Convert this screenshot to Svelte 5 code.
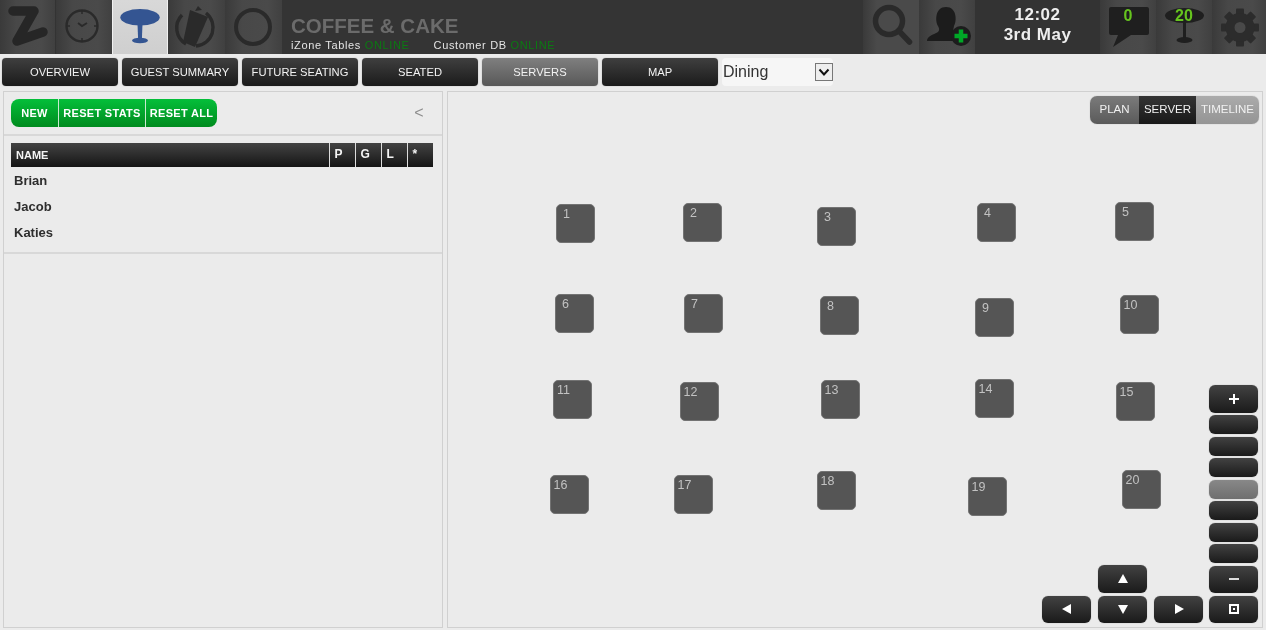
<script>
  const navItems = ['OVERVIEW', 'GUEST SUMMARY', 'FUTURE SEATING', 'SEATED', 'SERVERS', 'MAP'];
  const servers = ['Brian', 'Jacob', 'Katies'];
  const tables = [
    [556,204],[683,203],[817,207],[977,203],[1115,202],
    [555,294],[684,294],[820,296],[975,298],[1120,295],
    [553,380],[680,382],[821,380],[975,379],[1116,382],
    [550,475],[674,475],[817,471],[968,477],[1122,470]
  ];
  const steps = [0, 1, 2, 3, 4, 5, 6];
  const teeth = [0, 45, 90, 135, 180, 225, 270, 315];
</script>

<div class="page">
  <header class="top">
    <div class="tab w55">
      <svg width="55" height="54" viewBox="0 0 55 54"><path d="M13 11 L34 11 L17 41 L43 32" fill="none" stroke="#262626" stroke-width="9.500" stroke-linecap="round" stroke-linejoin="round"/></svg>
    </div>
    <div class="tab w57 sep">
      <svg width="56" height="54" viewBox="0 0 56 54"><g fill="none" stroke="#2a2a2a"><circle cx="27" cy="26" r="15.500" stroke-width="2.400"/><path d="M27 10v4M27 38v4M11 26h4M39 26h4" stroke-width="1.500"/><path d="M23 23l4 3 5-3" stroke-width="2"/></g></svg>
    </div>
    <div class="tab active">
      <svg width="54" height="54" viewBox="0 0 54 54"><ellipse cx="27" cy="17.300" rx="19.700" ry="8.300" fill="#345592"/><path d="M24.500 24h5l-.6 15h-3.800z" fill="#345592"/><ellipse cx="27" cy="40.500" rx="8" ry="2.800" fill="#345592"/></svg>
    </div>
    <div class="tab w57">
      <svg width="57" height="54" viewBox="0 0 57 54"><path d="M18 44A18.500 18.500 0 0 1 14 15M38 13A18.500 18.500 0 0 1 28 46" fill="none" stroke="#2a2a2a" stroke-width="3.400"/><path d="M22 10L40 17L27 47L15 42Z" fill="#2a2a2a"/><path d="M27 11l3-5 4 4z" fill="#2a2a2a"/></svg>
    </div>
    <div class="tab w57">
      <svg width="57" height="54" viewBox="0 0 57 54"><circle cx="28" cy="27" r="17" fill="none" stroke="#2a2a2a" stroke-width="4"/></svg>
    </div>
    <div class="title">
      <div class="name">COFFEE &amp; CAKE</div>
      <div class="status">
        <span>iZone Tables <em>ONLINE</em></span>
        <span>Customer DB <em>ONLINE</em></span>
      </div>
    </div>
    <div class="tab w56 right">
      <svg width="56" height="54" viewBox="0 0 56 54"><circle cx="26" cy="21" r="13.500" fill="none" stroke="#2a2a2a" stroke-width="5.500"/><path d="M36 31l10.500 11" stroke="#2a2a2a" stroke-width="5.500" stroke-linecap="round"/></svg>
    </div>
    <div class="tab w56">
      <svg width="56" height="54" viewBox="0 0 56 54"><path d="M8 41c0-5 6-6 11-9 2-2 1-4 0-6-3-5-3-19 8-19s11 14 8 19l-1 5 3 10z" fill="#1c1c1c"/><circle cx="42" cy="36" r="10" fill="#1c1c1c"/><path d="M42 29.500v13M35.500 36h13" stroke="#00a827" stroke-width="4.500"/></svg>
    </div>
    <div class="clock"><div>12:02</div><div>3rd May</div></div>
    <div class="tab w56 count">
      <svg width="56" height="54" viewBox="0 0 56 54"><path d="M11 7h36a2 2 0 0 1 2 2v24a2 2 0 0 1-2 2H31L13 47l5-12h-7a2 2 0 0 1-2-2V9a2 2 0 0 1 2-2z" fill="#1f1f1f"/></svg>
      <span class="num">0</span>
    </div>
    <div class="tab w56 count">
      <svg width="56" height="54" viewBox="0 0 56 54"><ellipse cx="28.500" cy="15.500" rx="19.500" ry="7.500" fill="#1f1f1f"/><rect x="27" y="22" width="3" height="16" fill="#1f1f1f"/><ellipse cx="28.500" cy="40" rx="8" ry="3" fill="#1f1f1f"/></svg>
      <span class="num">20</span>
    </div>
    <div class="tab w54">
      <svg width="54" height="54" viewBox="0 0 54 54">
        <g fill="#2c2c2c">
          {#each teeth as a}
            <rect x="24" y="8.500" width="8" height="10" rx="1" transform="rotate({a} 28 27.500)"/>
          {/each}
        </g>
        <circle cx="28" cy="27.500" r="10" fill="none" stroke="#2c2c2c" stroke-width="9"/>
      </svg>
    </div>
  </header>

  <nav class="nav">
    {#each navItems as item}
      <button class="navbtn" class:on={item === 'SERVERS'}>{item}</button>
    {/each}
    <div class="select">
      <span>Dining</span>
      <span class="arrow"><svg width="16" height="16" viewBox="0 0 16 16"><path d="M3.500 5.500L8 10.500l4.500-5" fill="none" stroke="#111" stroke-width="2"/></svg></span>
    </div>
  </nav>

  <main class="main">
    <section class="left">
      <div class="tools">
        <div class="greens">
          <span class="g gnew">NEW</span>
          <span class="g gstats">RESET STATS</span>
          <span class="g gall">RESET ALL</span>
        </div>
        <span class="collapse">&lt;</span>
      </div>
      <div class="list">
        <div class="thead">
          <span class="cname">NAME</span>
          <span class="c">P</span><span class="c">G</span><span class="c">L</span><span class="c">*</span>
        </div>
        {#each servers as s}
          <div class="row">{s}</div>
        {/each}
      </div>
    </section>

    <section class="plan">
      <div class="mode">
        <span class="m mplan">PLAN</span>
        <span class="m mserver">SERVER</span>
        <span class="m mtime">TIMELINE</span>
      </div>
    </section>

    {#each tables as t, i}
      <div class="table" style="left:{t[0]}px;top:{t[1]}px">{i + 1}</div>
    {/each}

    <div class="pad">
      <span class="ctl big slotup"><svg width="14" height="12" viewBox="0 0 14 12"><path d="M7 1l5 9H2z" fill="#fff"/></svg></span>
      <span class="ctl big slotleft"><svg width="14" height="12" viewBox="0 0 14 12"><path d="M2 6l9-5v10z" fill="#fff"/></svg></span>
      <span class="ctl big slotdown"><svg width="14" height="12" viewBox="0 0 14 12"><path d="M7 11l5-9H2z" fill="#fff"/></svg></span>
      <span class="ctl big slotright"><svg width="14" height="12" viewBox="0 0 14 12"><path d="M12 6L3 1v10z" fill="#fff"/></svg></span>
    </div>

    <div class="zoom">
      <span class="ctl big"><svg width="12" height="12" viewBox="0 0 12 12"><path d="M6 1v10M1 6h10" stroke="#fff" stroke-width="2"/></svg></span>
      {#each steps as s}
        <span class="ctl small" class:cur={s === 3}></span>
      {/each}
      <span class="ctl big"><svg width="12" height="12" viewBox="0 0 12 12"><path d="M1 6h10" stroke="#ddd" stroke-width="2"/></svg></span>
      <span class="ctl big"><svg width="10" height="10" viewBox="0 0 10 10"><path d="M1 1h8v8H1z" fill="none" stroke="#fff" stroke-width="2"/><rect x="4" y="4" width="2" height="2" fill="#fff"/></svg></span>
    </div>
  </main>
</div>

<style>
  :global(body) { margin: 0; background: #ebebeb; overflow: hidden; }
  .page { width: 1266px; height: 630px; position: relative; overflow: hidden; font-family: "Liberation Sans", Arial, sans-serif; background: #ebebeb; }

  .top { height: 54px; display: flex; will-change: transform; }
  .tab { height: 54px; flex: none; position: relative; box-sizing: border-box; background: linear-gradient(90deg, #3a3a3a 0%, #484848 30%, #4a4a4a 75%, #404040 100%); }
  .tab svg { display: block; }
  .w54 { width: 54px; }
  .w55 { width: 55px; }
  .w56 { width: 56px; }
  .w57 { width: 57px; }
  .sep { border-left: 1px solid #333; }
  .sep svg { margin-left: -1px; }
  .active { width: 56px; background: linear-gradient(#d8d8d8, #cfcfcf); border-left: 1px solid #f0f0f0; border-right: 1px solid #f0f0f0; }
  .title { flex: 1; padding-left: 9px; min-width: 0; background: #343434; }
  .name { font-size: 20.500px; line-height: 24px; margin-top: 14px; font-weight: 700; color: #6b6b6b; white-space: nowrap; }
  .status { display: flex; gap: 24px; font-size: 11px; line-height: 13px; margin-top: 1px; letter-spacing: 0.65px; color: #e4e4e4; white-space: nowrap; }
  .status em { font-style: normal; color: #0b7a12; }
  .right { background: linear-gradient(90deg, #3a3a3a, #4a4a4a 25%, #4a4a4a 100%); }
  .clock { width: 125px; flex: none; text-align: center; color: #eee; font-weight: 700; font-size: 17px; line-height: 20px; letter-spacing: 0.5px; padding-top: 5px; box-sizing: border-box; background: #333; }
  .num { position: absolute; left: 0; right: 0; top: 7px; text-align: center; color: #66c41e; font-weight: 700; font-size: 16px; line-height: 18px; }

  .nav { display: flex; gap: 4px; padding: 4px 0 0 2px; height: 32px; align-items: flex-start; will-change: transform; }
  .navbtn { width: 116px; height: 28px; padding: 0; border: 0; border-radius: 4px; color: #f2f2f2; font: 11.200px/28px "Liberation Sans", Arial, sans-serif; background: linear-gradient(#3f3f3f, #1b1b1b); box-shadow: 0 0 1px #777; }
  .navbtn.on { background: linear-gradient(#7f7f7f, #585858); }
  .select { width: 111px; height: 28px; box-sizing: border-box; background: #f6f6f6; border-radius: 4px; display: flex; align-items: center; justify-content: space-between; padding: 0 0 0 1px; font-size: 16px; color: #333; }
  .arrow { width: 16px; height: 16px; border: 1px solid #777; background: #eee; display: block; }
  .arrow svg { display: block; }

  .main { position: absolute; inset: 0; pointer-events: none; will-change: transform; }
  .left { position: absolute; left: 3px; top: 91px; width: 439.500px; height: 537px; box-sizing: border-box; border: 1px solid #d0d0d0; }
  .tools { height: 44px; box-sizing: border-box; border-bottom: 2px solid #d8d8d8; display: flex; align-items: center; justify-content: space-between; padding: 0 18px 0 7px; }
  .greens { display: flex; height: 28px; border-radius: 8px; overflow: hidden; color: #fff; font-size: 11px; font-weight: 700; line-height: 28px; text-align: center; letter-spacing: 0.3px; }
  .g { background: linear-gradient(#04bf3a, #008b1e); box-sizing: border-box; white-space: nowrap; }
  .gnew { width: 47px; }
  .gstats { width: 87px; border-left: 1px solid #c9e9cf; }
  .gall { width: 72px; border-left: 1px solid #c9e9cf; }
  .collapse { color: #8d8d8d; font-size: 16px; }
  .list { border-bottom: 2px solid #d8d8d8; padding: 7px 9px 0 7px; height: 118px; box-sizing: border-box; }
  .thead { height: 24px; background: linear-gradient(#434343, #151515); display: flex; color: #f4f4f4; font-size: 11px; font-weight: 700; line-height: 24px; }
  .cname { flex: 1; padding-left: 5px; }
  .c { width: 26px; box-sizing: border-box; border-left: 1px solid #ddd; padding-left: 5px; font-size: 12px; line-height: 22px; }
  .row { height: 26px; line-height: 27px; padding-left: 3px; font-size: 13px; font-weight: 700; color: #2e2e2e; }

  .plan { position: absolute; left: 447px; top: 91px; width: 816px; height: 537px; box-sizing: border-box; border: 1px solid #d0d0d0; }
  .mode { position: absolute; right: 3px; top: 4px; display: flex; height: 28px; border-radius: 7px; overflow: hidden; font-size: 11.500px; line-height: 27px; color: #f1f1f1; text-align: center; box-shadow: 0 0 1px #999; }
  .m { white-space: nowrap; }
  .mplan { width: 49px; background: linear-gradient(#7b7b7b, #5a5a5a); }
  .mserver { width: 57px; background: linear-gradient(#343434, #191919); }
  .mtime { width: 63px; background: linear-gradient(#ababab, #949494); }

  .table { position: absolute; width: 39px; height: 39px; box-sizing: border-box; border-radius: 5px; background: #555; border: 1px solid #737373; color: #c2c2c2; font-size: 12.500px; line-height: 18px; padding-right: 18px; text-align: center; }

  .ctl { display: flex; align-items: center; justify-content: center; width: 49px; box-sizing: border-box; border-radius: 6px; background: linear-gradient(#424242, #1a1a1a); box-shadow: 0 0 1px #888; }
  .ctl svg { display: block; }
  .big { height: 27.500px; }
  .small { height: 19px; }
  .cur { background: linear-gradient(#888, #6f6f6f); }

  .zoom { position: absolute; left: 1209px; top: 385px; display: flex; flex-direction: column; gap: 2.500px; }
  .pad { position: absolute; left: 1042px; top: 565px; display: grid; grid-template-columns: 49px 49px 49px; column-gap: 7px; row-gap: 3px; }
  .slotup { grid-column: 2; grid-row: 1; }
  .slotleft { grid-column: 1; grid-row: 2; }
  .slotdown { grid-column: 2; grid-row: 2; }
  .slotright { grid-column: 3; grid-row: 2; }
</style>
